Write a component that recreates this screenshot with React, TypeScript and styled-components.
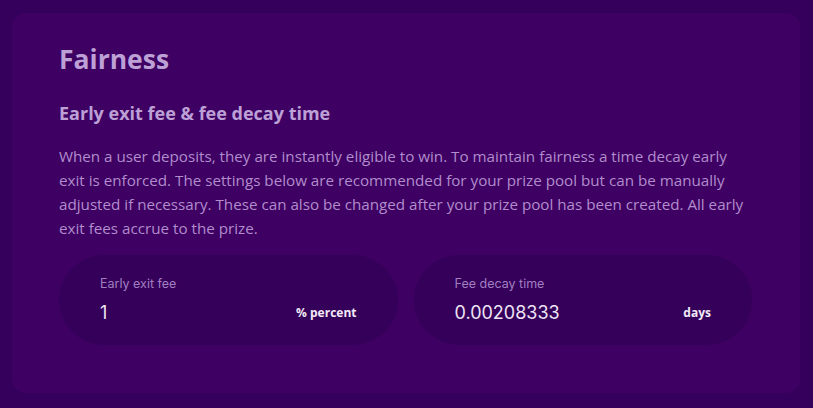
import React from "react";
import styled, { createGlobalStyle } from "styled-components";

const Global = createGlobalStyle`
  html, body { margin: 0; padding: 0; background: #35005b; }
  body { font-family: "Open Sans", "Noto Sans", sans-serif; }
`;

const Page = styled.div`
  width: 813px;
  height: 408px;
  box-sizing: border-box;
  padding: 13px 13px 15px 12px;
  background: #35005b;
`;

const Card = styled.section`
  box-sizing: border-box;
  height: 100%;
  background: #3e0062;
  border-radius: 14px;
  padding: 28px 48px 0 47px;
  color: #bb9bd6;
`;

const Title = styled.h1`
  margin: 0;
  font-size: 26.5px;
  line-height: 36px;
  font-weight: 700;
  color: #bca0d6;
`;

const Subtitle = styled.h2`
  margin: 23px 0 0;
  font-size: 18px;
  line-height: 26px;
  font-weight: 700;
  color: #bca0d6;
`;

const Body = styled.p`
  margin: 18px 0 0;
  font-size: 15.2px;
  line-height: 24px;
  color: #b18dcd;
  white-space: nowrap;
`;

const Fields = styled.div`
  display: grid;
  grid-template-columns: 1fr 1fr;
  gap: 16px;
  margin-top: 15px;
`;

const Pill = styled.div`
  height: 90px;
  border-radius: 45px;
  background: #35005a;
  padding: 0 41px;
  display: flex;
  flex-direction: column;
  justify-content: center;
`;

const Label = styled.div`
  font-family: "Inter", sans-serif;
  font-size: 12.5px;
  line-height: 16px;
  color: #a27fc1;
`;

const Row = styled.div`
  display: flex;
  align-items: center;
  justify-content: space-between;
  margin-top: 9px;
`;

const Value = styled.div`
  font-family: "Inter", sans-serif;
  font-size: 18px;
  line-height: 24px;
  color: #eee4f5;
`;

const Unit = styled.div`
  font-size: 12px;
  font-weight: 700;
  color: #f2eaf7;
`;

export default function App() {
  return (
    <>
      <Global />
      <Page>
        <Card>
          <Title>Fairness</Title>
          <Subtitle>Early exit fee &amp; fee decay time</Subtitle>
          <Body>
            When a user deposits, they are instantly eligible to win. To maintain fairness a time decay early
            <br />
            exit is enforced. The settings below are recommended for your prize pool but can be manually
            <br />
            adjusted if necessary. These can also be changed after your prize pool has been created. All early
            <br />
            exit fees accrue to the prize.
          </Body>
          <Fields>
            <Pill>
              <Label>Early exit fee</Label>
              <Row>
                <Value>1</Value>
                <Unit>% percent</Unit>
              </Row>
            </Pill>
            <Pill>
              <Label>Fee decay time</Label>
              <Row>
                <Value>0.00208333</Value>
                <Unit>days</Unit>
              </Row>
            </Pill>
          </Fields>
        </Card>
      </Page>
    </>
  );
}
